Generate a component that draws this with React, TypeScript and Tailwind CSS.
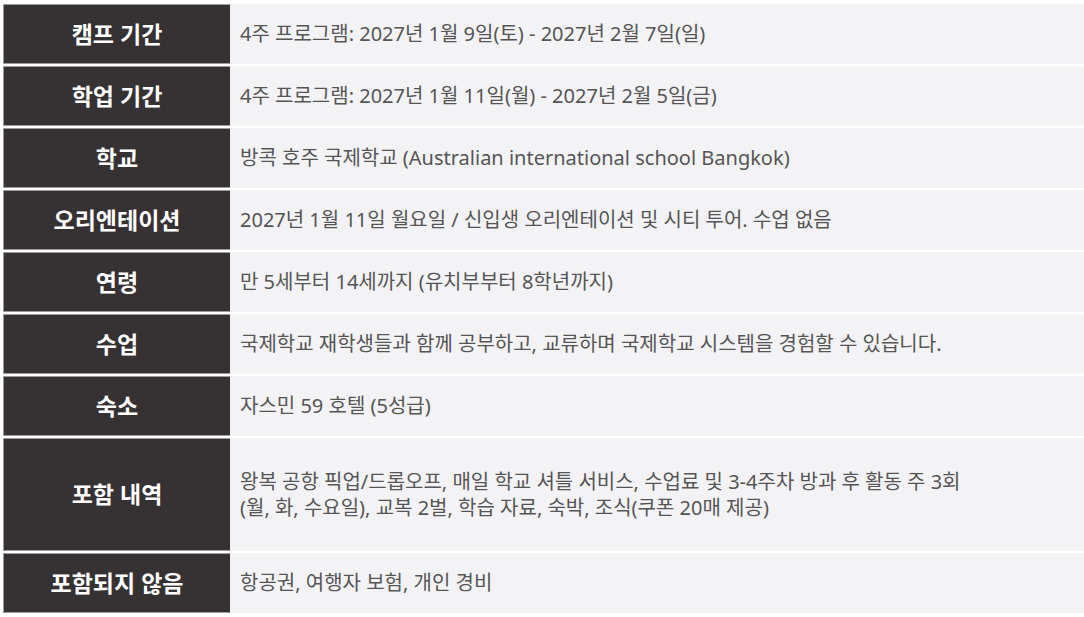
const rows: { label: string; lines: string[]; tall?: boolean }[] = [
  { label: "캠프 기간", lines: ["4주 프로그램: 2027년 1월 9일(토) - 2027년 2월 7일(일)"] },
  { label: "학업 기간", lines: ["4주 프로그램: 2027년 1월 11일(월) - 2027년 2월 5일(금)"] },
  { label: "학교", lines: ["방콕 호주 국제학교 (Australian international school Bangkok)"] },
  { label: "오리엔테이션", lines: ["2027년 1월 11일 월요일 / 신입생 오리엔테이션 및 시티 투어. 수업 없음"] },
  { label: "연령", lines: ["만 5세부터 14세까지 (유치부부터 8학년까지)"] },
  { label: "수업", lines: ["국제학교 재학생들과 함께 공부하고, 교류하며 국제학교 시스템을 경험할 수 있습니다."] },
  { label: "숙소", lines: ["자스민 59 호텔 (5성급)"] },
  {
    label: "포함 내역",
    lines: [
      "왕복 공항 픽업/드롭오프, 매일 학교 셔틀 서비스, 수업료 및 3-4주차 방과 후 활동 주 3회",
      "(월, 화, 수요일), 교복 2벌, 학습 자료, 숙박, 조식(쿠폰 20매 제공)",
    ],
    tall: true,
  },
  { label: "포함되지 않음", lines: ["항공권, 여행자 보험, 개인 경비"] },
];

export default function App() {
  return (
    <div className="min-h-screen w-full bg-white pt-[4px] pl-[3px] font-['Noto_Sans','Noto_Sans_CJK_KR',sans-serif]">
      <div className="flex flex-col gap-[2px]">
        {rows.map((row) => (
          <div
            key={row.label}
            className={`flex ${row.tall ? "h-[113px]" : "h-[60px]"}`}
          >
            <div className="flex w-[227px] shrink-0 items-center justify-center border border-r-0 border-[#9a9a9a] bg-[#363132] text-[23px] font-bold text-white">
              {row.label}
            </div>
            <div className="flex flex-1 flex-col justify-center bg-[#f3f3f5] pl-[10px] text-[20px] leading-[26px] text-[#555555]">
              {row.lines.map((line) => (
                <div key={line}>{line}</div>
              ))}
            </div>
          </div>
        ))}
      </div>
    </div>
  );
}
